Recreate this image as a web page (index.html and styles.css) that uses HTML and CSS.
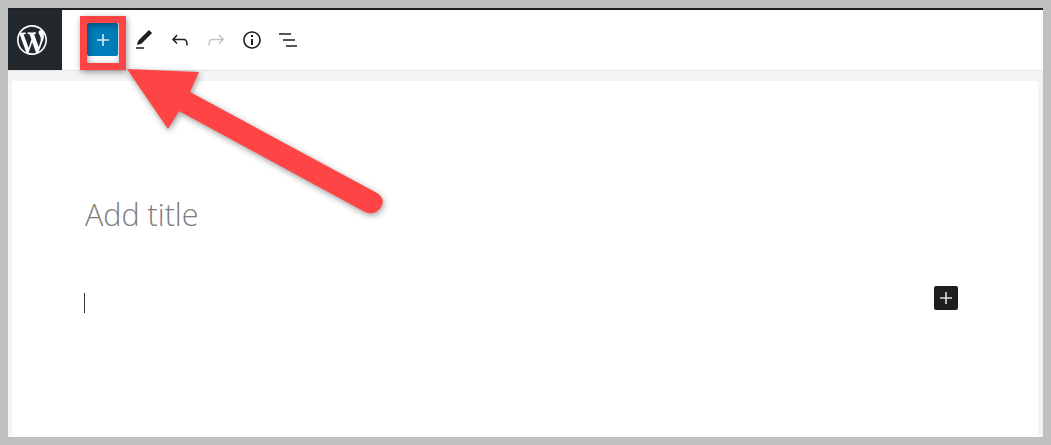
FILE: index.html
```html
<!DOCTYPE html>
<html lang="en">
<head>
    <meta charset="UTF-8">
    <title>Add title</title>
    <link rel="stylesheet" href="styles.css">
</head>
<body>

<div class="frame">

    <!-- Top toolbar -->
    <div class="toolbar">
        <div class="wp-logo">
            <svg width="30" height="30" viewBox="0 0 20 20"><path fill="#fff" d="M20 10c0-5.51-4.49-10-10-10C4.48 0 0 4.49 0 10c0 5.52 4.48 10 10 10 5.51 0 10-4.48 10-10zM7.78 15.37L4.37 6.22c.55-.02 1.17-.08 1.17-.08.5-.06.44-1.13-.06-1.11 0 0-1.45.11-2.37.11-.18 0-.37 0-.58-.01C4.12 2.69 6.87 1.11 10 1.11c2.33 0 4.45.87 6.05 2.34-.68-.11-1.65.39-1.65 1.58 0 .74.45 1.36.9 2.1.35.61.55 1.36.55 2.46 0 1.49-1.4 5-1.4 5l-3.03-8.37c.54-.02.82-.17.82-.17.5-.05.44-1.25-.06-1.22 0 0-1.44.12-2.38.12-.87 0-2.33-.12-2.33-.12-.5-.03-.56 1.2-.06 1.22l.92.08 1.26 3.41zM17.41 10c.24-.64.74-1.87.43-4.25.7 1.29 1.05 2.71 1.05 4.25 0 3.29-1.73 6.24-4.4 7.78.97-2.59 1.94-5.2 2.92-7.78zM6.1 18.09C3.12 16.65 1.11 13.53 1.11 10c0-1.3.23-2.48.72-3.59C3.25 10.3 4.67 14.2 6.1 18.09zm4.03-6.63l2.58 6.98c-.86.29-1.76.45-2.71.45-.79 0-1.57-.11-2.29-.33.81-2.38 1.62-4.74 2.42-7.1z"/></svg>
        </div>
        <button class="inserter">
            <svg width="16" height="16" viewBox="0 0 16 16"><path fill="#d8e9f3" d="M7.2 2h1.6v5.2H14v1.6H8.8V14H7.2V8.8H2V7.2h5.2z"/></svg>
        </button>
        <div class="tools">
            <span class="tool"><svg width="24" height="24" viewBox="0 0 24 24"><path d="M20.1 5.1L16.9 2 6.2 12.7l-1.3 4.4 4.5-1.3L20.1 5.1zM4 20.8h8v-1.5H4v1.5z"/></svg></span>
            <span class="tool"><svg width="24" height="24" viewBox="0 0 24 24"><path d="M18.3 11.7c-.6-.6-1.4-.9-2.3-.9H6.7l2.9-3.3-1.1-1-4.5 5L8.5 16l1-1-2.7-2.7H16c.5 0 .9.2 1.3.5 1 1 1 3.4 1 4.5v.3h1.5v-.2c0-1.5 0-4.3-1.5-5.7z"/></svg></span>
            <span class="tool disabled"><svg width="24" height="24" viewBox="0 0 24 24"><path d="M15.6 6.5l-1.1 1 2.9 3.3H8c-.9 0-1.7.3-2.3.9-1.4 1.5-1.4 4.2-1.4 5.7v.2h1.5v-.3c0-1.1 0-3.5 1-4.5.3-.3.7-.5 1.3-.5h9.2L14.5 15l1.1 1.1 4.6-4.6-4.6-5z"/></svg></span>
            <span class="tool"><svg width="24" height="24" viewBox="0 0 24 24"><path d="M12 3.2c-4.8 0-8.8 3.9-8.8 8.8 0 4.8 3.9 8.8 8.8 8.8 4.8 0 8.8-3.9 8.8-8.8 0-4.8-4-8.8-8.8-8.8zm0 16c-4 0-7.2-3.3-7.2-7.2C4.8 8 8 4.8 12 4.8s7.2 3.3 7.2 7.2c0 4-3.2 7.2-7.2 7.2zM11 17h2v-6h-2v6zm0-8h2V7h-2v2z"/></svg></span>
            <span class="tool"><svg width="24" height="24" viewBox="0 0 24 24"><path d="M3 4.2h12v1.5H3zM7 10.2h12v1.5H7zM10 16.3h11v1.5H10z" transform="translate(0 1)"/></svg></span>
        </div>
    </div>

    <!-- Editor canvas -->
    <div class="canvas">
        <div class="page">
            <h1 class="post-title">Add title</h1>
            <div class="block-row">
                <div class="caret"></div>
                <button class="block-add">
                    <svg width="16" height="16" viewBox="0 0 16 16"><path fill="#ddd" d="M7.2 2h1.6v5.2H14v1.6H8.8V14H7.2V8.8H2V7.2h5.2z"/></svg>
                </button>
            </div>
        </div>
    </div>
</div>

<!-- Red annotation drawn on top of the screenshot -->
<svg class="annotation" width="1051" height="445" viewBox="0 0 1051 445">
    <rect x="83.5" y="19.5" width="39" height="47" fill="none" stroke="#fe4445" stroke-width="7"/>
    <path fill="#fe4445" d="M127 69L199 72L190 92L377 193Q386 199 381 207Q375 216 365 212L179 111L168 129Z"/>
</svg>

</body>
</html>
```

FILE: styles.css
```css
body {
    margin: 0;
    padding: 8px 8px 8px;
    height: 445px;
    box-sizing: border-box;
    background: #c0c0c0;
    font-family: "Open Sans", sans-serif;
    overflow: hidden;
}

.frame {
    height: 429px;
    border-top: 2px solid #1e2125;
    box-sizing: border-box;
    background: white;
    display: flex;
    flex-direction: column;
}

.toolbar {
    display: flex;
    height: 61px;
    flex-shrink: 0;
    border-bottom: 1px solid #e6e6e6;
    box-sizing: border-box;
    background: white;
}

.wp-logo {
    width: 54px;
    height: 60px;
    box-sizing: border-box;
    padding-left: 9px;
    background: #23282d;
    display: flex;
    align-items: center;
}

.inserter {
    width: 31px;
    height: 33px;
    margin: 13px 0 0 25px;
    padding: 0;
    border: none;
    border-radius: 2px;
    background: #007cba;
    display: flex;
    align-items: center;
    justify-content: center;
}

.tools {
    display: flex;
    margin-left: 14px;
    padding-top: 18px;
}

.tool {
    width: 24px;
    height: 24px;
    margin-right: 12px;
    fill: #1e1e1e;
}

.tool svg {
    display: block;
}

.tool.disabled {
    fill: #c4c4c4;
}

.canvas {
    flex: 1;
    background: #f3f4f5;
    padding: 10px 5px 0 4px;
    display: flex;
}

.page {
    flex: 1;
    background: white;
    padding: 113px 80px 0 72px;
}

.post-title {
    margin: 0;
    font-size: 30.5px;
    font-weight: 300;
    line-height: 40px;
    color: #7d7d7d;
    padding-left: 1px;
}

.block-row {
    display: flex;
    justify-content: space-between;
    align-items: flex-start;
    margin-top: 52px;
}

.caret {
    width: 1px;
    height: 20px;
    margin-top: 7px;
    background: #333;
}

.block-add {
    width: 24px;
    height: 24px;
    padding: 0;
    border: none;
    border-radius: 2px;
    background: #1e1e1e;
    display: flex;
    align-items: center;
    justify-content: center;
}

.annotation {
    position: absolute;
    top: 0;
    left: 0;
    filter: drop-shadow(1px 2px 3px rgba(0,0,0,0.4));
}
```
